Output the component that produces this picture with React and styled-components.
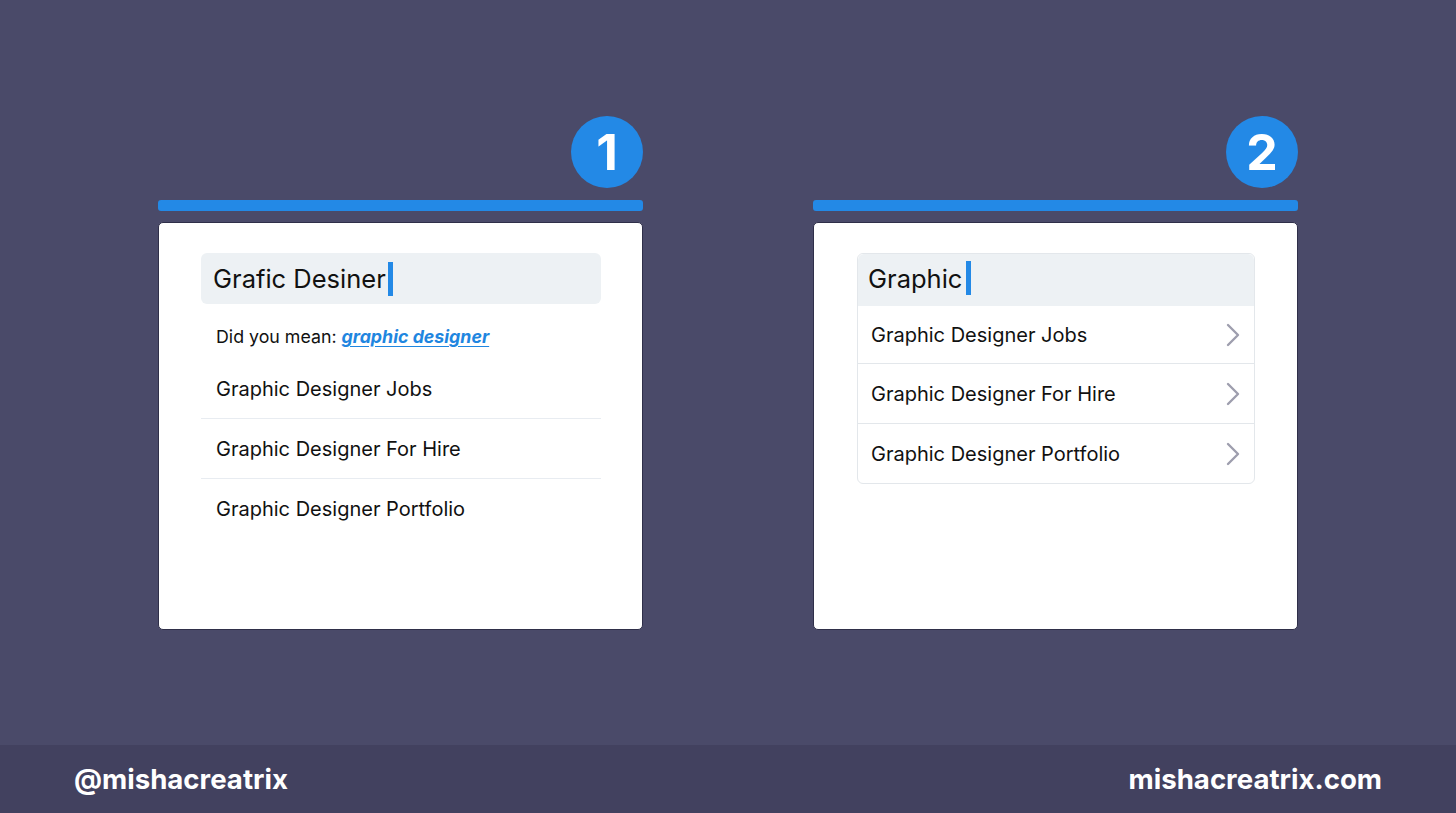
import React from 'react';
import styled, { createGlobalStyle } from 'styled-components';

const GlobalStyle = createGlobalStyle`
  html, body {
    margin: 0;
    padding: 0;
    background: #4a4a69;
    font-family: Inter, "Noto Sans", sans-serif;
  }
`;

const Page = styled.div`
  width: 1456px;
  height: 813px;
  display: flex;
  flex-direction: column;
  background: #4a4a69;
  overflow: hidden;
`;

const Stage = styled.main`
  flex: 1;
  display: flex;
  justify-content: center;
  gap: 170px;
  padding-top: 116px;
  box-sizing: border-box;
`;

const Panel = styled.section`
  width: 485px;
  display: flex;
  flex-direction: column;
`;

const BadgeRow = styled.div`
  display: flex;
  justify-content: flex-end;
`;

const Badge = styled.div`
  width: 72px;
  height: 72px;
  border-radius: 50%;
  background: #2389e6;
  color: #fff;
  font-size: 50px;
  font-weight: 700;
  display: flex;
  align-items: center;
  justify-content: center;
`;

const Bar = styled.div`
  height: 11px;
  margin-top: 12px;
  border-radius: 3px;
  background: #2389e6;
`;

const Card = styled.div`
  margin-top: 11px;
  height: 408px;
  box-sizing: border-box;
  background: #fff;
  border: 1px solid #2f2f49;
  border-radius: 5px;
  padding: 30px 41px 0 42px;
`;

const SearchField = styled.div`
  height: ${p => (p.$attached ? 52 : 51)}px;
  box-sizing: border-box;
  background: #edf1f4;
  border-radius: ${p => (p.$attached ? '6px 6px 0 0' : '6px')};
  display: flex;
  align-items: center;
  padding-left: ${p => (p.$attached ? 10 : 12)}px;
  padding-bottom: ${p => (p.$attached ? 4 : 0)}px;
  font-size: 25.5px;
  color: #111;
`;

const Cursor = styled.span`
  display: inline-block;
  width: 5px;
  height: 34px;
  margin-left: ${p => p.$gap}px;
  background: #2389e6;
`;

const Suggest = styled.div`
  margin-top: 21px;
  padding-left: 15px;
  font-size: 17.8px;
  line-height: 24px;
  color: #111;
`;

const SuggestLink = styled.a`
  color: #1f86e0;
  font-weight: 700;
  font-style: italic;
  text-decoration: underline;
  text-underline-offset: 3px;
`;

const PlainList = styled.ul`
  list-style: none;
  margin: 10px 0 0;
  padding: 0;
`;

const PlainItem = styled.li`
  height: 60px;
  box-sizing: border-box;
  display: flex;
  align-items: center;
  padding-left: 15px;
  font-size: 20px;
  color: #111;
  border-bottom: 1px solid #e8ecf1;
  &:last-child {
    border-bottom: none;
  }
`;

const Box = styled.div`
  margin: 0 1px;
  border: 1px solid #e3e7eb;
  border-radius: 6px;
  overflow: hidden;
`;

const BoxList = styled.ul`
  list-style: none;
  margin: 0;
  padding: 0;
`;

const BoxItem = styled.li`
  height: 60px;
  box-sizing: border-box;
  display: flex;
  align-items: center;
  justify-content: space-between;
  padding: 0 13px 0 13px;
  font-size: 20px;
  color: #111;
  border-top: 1px solid #e3e7eb;
  &:first-child {
    height: 57px;
    border-top: none;
  }
`;

const Footer = styled.footer`
  height: 68px;
  background: #42415f;
  display: flex;
  align-items: center;
  justify-content: space-between;
  padding: 0 74px;
  color: #fff;
  font-size: 27.6px;
  font-weight: 700;
`;

const Chevron = () => (
  <svg width="16" height="24" viewBox="0 0 16 24" fill="none">
    <polyline points="3,2 13,12 3,22" stroke="#9e9eae" strokeWidth="2.4" strokeLinecap="round" strokeLinejoin="round" />
  </svg>
);

const items = ['Graphic Designer Jobs', 'Graphic Designer For Hire', 'Graphic Designer Portfolio'];

export default function App() {
  return (
    <Page>
      <GlobalStyle />
      <Stage>
        <Panel>
          <BadgeRow><Badge>1</Badge></BadgeRow>
          <Bar />
          <Card>
            <SearchField>
              Grafic Desiner<Cursor $gap={2} />
            </SearchField>
            <Suggest>
              Did you mean: <SuggestLink>graphic designer</SuggestLink>
            </Suggest>
            <PlainList>
              {items.map(t => <PlainItem key={t}>{t}</PlainItem>)}
            </PlainList>
          </Card>
        </Panel>
        <Panel>
          <BadgeRow><Badge>2</Badge></BadgeRow>
          <Bar />
          <Card>
            <Box>
              <SearchField $attached>
                Graphic<Cursor $gap={4} />
              </SearchField>
              <BoxList>
                {items.map(t => (
                  <BoxItem key={t}>
                    {t}
                    <Chevron />
                  </BoxItem>
                ))}
              </BoxList>
            </Box>
          </Card>
        </Panel>
      </Stage>
      <Footer>
        <span>@mishacreatrix</span>
        <span>mishacreatrix.com</span>
      </Footer>
    </Page>
  );
}
